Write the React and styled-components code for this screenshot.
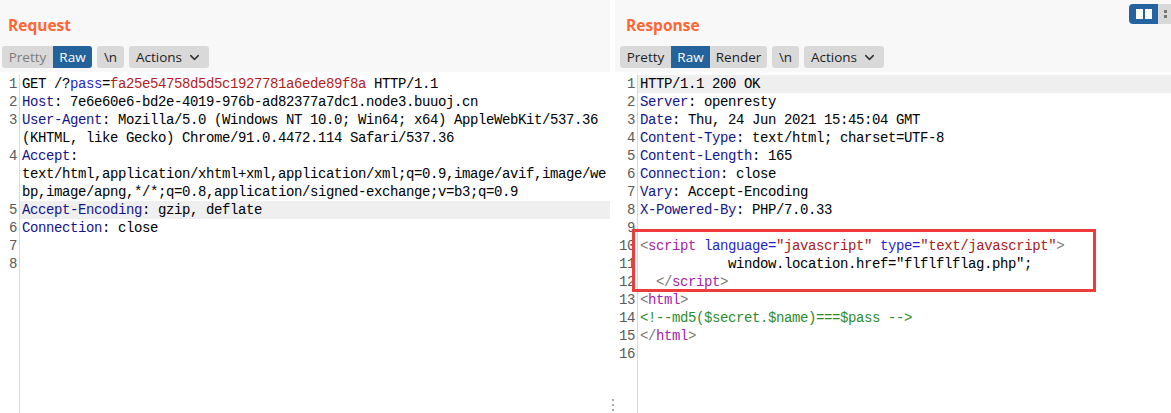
import React from "react";
import styled, { createGlobalStyle } from "styled-components";
import { ChevronDown } from "lucide-react";

const Global = createGlobalStyle`
  html, body, #root {
    margin: 0;
    height: 100%;
    overflow: hidden;
    background: #ffffff;
  }
`;

const C = {
  plain: "#000000",
  key: "#15158a",
  param: "#2626c8",
  val: "#b31d1d",
  tag: "#a424a4",
  punc: "#7a7a7a",
  attr: "#1f1fd0",
  str: "#a52020",
  cmt: "#2f8a2f",
};

const request = [
  { rows: [[["GET /?"], ["pass", "param"], ["="], ["fa25e54758d5d5c1927781a6ede89f8a", "val"], [" HTTP/1.1"]]] },
  { rows: [[["Host", "key"], [": 7e6e60e6-bd2e-4019-976b-ad82377a7dc1.node3.buuoj.cn"]]] },
  {
    rows: [
      [["User-Agent", "key"], [": Mozilla/5.0 (Windows NT 10.0; Win64; x64) AppleWebKit/537.36"]],
      [["(KHTML, like Gecko) Chrome/91.0.4472.114 Safari/537.36"]],
    ],
  },
  {
    rows: [
      [["Accept", "key"], [":"]],
      [["text/html,application/xhtml+xml,application/xml;q=0.9,image/avif,image/we"]],
      [["bp,image/apng,*/*;q=0.8,application/signed-exchange;v=b3;q=0.9"]],
    ],
  },
  { rows: [[["Accept-Encoding", "key"], [": gzip, deflate"]]], hl: true },
  { rows: [[["Connection", "key"], [": close"]]] },
  { rows: [[]] },
  { rows: [[]] },
];

const response = [
  { rows: [[["HTTP/1.1 200 OK"]]], hl: true },
  { rows: [[["Server", "key"], [": openresty"]]] },
  { rows: [[["Date", "key"], [": Thu, 24 Jun 2021 15:45:04 GMT"]]] },
  { rows: [[["Content-Type", "key"], [": text/html; charset=UTF-8"]]] },
  { rows: [[["Content-Length", "key"], [": 165"]]] },
  { rows: [[["Connection", "key"], [": close"]]] },
  { rows: [[["Vary", "key"], [": Accept-Encoding"]]] },
  { rows: [[["X-Powered-By", "key"], [": PHP/7.0.33"]]] },
  { rows: [[]] },
  {
    rows: [
      [
        ["<", "punc"], ["script", "tag"], [" "], ["language=", "attr"], ['"javascript"', "str"],
        [" "], ["type=", "attr"], ['"text/javascript"', "str"], [">", "punc"],
      ],
    ],
  },
  { rows: [[['           window.location.href="flflflflag.php";']]] },
  { rows: [[["  "], ["</", "punc"], ["script", "tag"], [">", "punc"]]] },
  { rows: [[["<", "punc"], ["html", "tag"], [">", "punc"]]] },
  { rows: [[["<!--md5($secret.$name)===$pass -->", "cmt"]]] },
  { rows: [[["</", "punc"], ["html", "tag"], [">", "punc"]]] },
  { rows: [[]] },
];

function CodeView({ lines, children }) {
  return (
    <Body>
      <Gutter>
        {lines.map((l, i) => (
          <LineNo key={i} $rows={l.rows.length}>
            {i + 1}
          </LineNo>
        ))}
      </Gutter>
      <Lines>
        {lines.map((l, i) => (
          <Line key={i} $hl={l.hl}>
            {l.rows.map((r, j) => (
              <Row key={j}>
                {r.map(([t, k = "plain"], n) => (
                  <Tok key={n} $c={C[k]}>
                    {t}
                  </Tok>
                ))}
              </Row>
            ))}
          </Line>
        ))}
      </Lines>
      {children}
    </Body>
  );
}

function Toolbar({ tabs, active, disabledFirst }) {
  return (
    <Bar>
      <Segment>
        {tabs.map(([label, w]) => (
          <Btn key={label} $w={w} $active={label === active} $muted={disabledFirst && label === "Pretty"}>
            {label}
          </Btn>
        ))}
      </Segment>
      <Btn $w={27} $round>
        \n
      </Btn>
      <Btn $w={80} $round>
        Actions
        <ChevronDown size={15} strokeWidth={2.4} color="#333" />
      </Btn>
    </Bar>
  );
}

export default function App() {
  return (
    <>
      <Global />
      <Page>
        <Panel $left>
          <Header>
            <TitleRow>
              <Title>Request</Title>
            </TitleRow>
            <Toolbar tabs={[["Pretty", 51], ["Raw", 39]]} active="Raw" disabledFirst />
          </Header>
          <CodeView lines={request} />
        </Panel>
        <Splitter>
          <Dot />
          <Dot />
          <Dot />
        </Splitter>
        <Panel>
          <Header>
            <TitleRow>
              <Title>Response</Title>
              <Toggle>
                <ToggleBtn $on>
                  <svg width="16" height="10" viewBox="0 0 16 10">
                    <rect x="0" y="0" width="7" height="10" fill="#fff" />
                    <rect x="9" y="0" width="7" height="10" fill="#fff" />
                  </svg>
                </ToggleBtn>
                <ToggleBtn>
                  <svg width="10" height="10" viewBox="0 0 10 10">
                    <rect x="0" y="1" width="3" height="3" fill="#777" />
                    <rect x="0" y="6" width="3" height="3" fill="#777" />
                  </svg>
                </ToggleBtn>
              </Toggle>
            </TitleRow>
            <Toolbar tabs={[["Pretty", 51], ["Raw", 39], ["Render", 57]]} active="Raw" />
          </Header>
          <CodeView lines={response}>
            <Marker />
          </CodeView>
        </Panel>
      </Page>
    </>
  );
}

const Page = styled.div`
  display: flex;
  height: 100%;
  overflow: hidden;
`;

const Panel = styled.div`
  display: flex;
  flex-direction: column;
  flex: ${(p) => (p.$left ? "0 0 613px" : "1 1 auto")};
  margin-left: ${(p) => (p.$left ? "-3px" : "0")};
  min-width: 0;
`;

const Header = styled.div`
  background: #f8f8f8;
  padding-bottom: 4px;
`;

const TitleRow = styled.div`
  display: flex;
  justify-content: space-between;
  align-items: flex-start;
  height: 46px;
  padding-left: 11px;
`;

const Title = styled.div`
  margin-top: 15px;
  font-family: "Open Sans", "Noto Sans", sans-serif;
  font-weight: 700;
  font-size: 15.5px;
  line-height: 20px;
  color: #ff6633;
`;

const Toggle = styled.div`
  display: flex;
  margin-top: 4px;
  margin-right: -8px;
  height: 20px;
`;

const ToggleBtn = styled.div`
  display: flex;
  align-items: center;
  justify-content: center;
  width: ${(p) => (p.$on ? "29px" : "21px")};
  background: ${(p) => (p.$on ? "#2462a0" : "#d9d9d9")};
  border-radius: ${(p) => (p.$on ? "4px 0 0 4px" : "0")};
`;

const Bar = styled.div`
  display: flex;
  gap: 5px;
  height: 22px;
  padding-left: 5px;
`;

const Segment = styled.div`
  display: flex;
  border-radius: 3px;
  overflow: hidden;
`;

const Btn = styled.div`
  display: flex;
  align-items: center;
  justify-content: center;
  gap: 5px;
  box-sizing: border-box;
  width: ${(p) => p.$w}px;
  height: 22px;
  border-radius: ${(p) => (p.$round ? "3px" : "0")};
  background: ${(p) => (p.$active ? "#24629b" : "#d9d9d9")};
  color: ${(p) => (p.$active ? "#ffffff" : p.$muted ? "#7d7d7d" : "#1e1e1e")};
  font-family: "Open Sans", "Noto Sans", sans-serif;
  font-size: 13.5px;
  white-space: pre;
`;

const Splitter = styled.div`
  flex: 0 0 5px;
  display: flex;
  flex-direction: column;
  align-items: center;
  justify-content: flex-end;
  gap: 3px;
  padding-bottom: 2px;
`;

const Dot = styled.div`
  width: 2px;
  height: 2px;
  background: #a8a8a8;
`;

const Body = styled.div`
  position: relative;
  flex: 1;
  display: flex;
  margin-top: 3px;
  font-family: "Liberation Mono", "DejaVu Sans Mono", monospace;
  font-size: 14px;
  letter-spacing: -0.4px;
  line-height: 18px;
`;

const Gutter = styled.div`
  flex: 0 0 20px;
  border-right: 1px solid #d8d8d8;
  padding-right: 2px;
  text-align: right;
  color: #5a5a5a;
`;

const LineNo = styled.div`
  height: ${(p) => p.$rows * 18}px;
`;

const Lines = styled.div`
  flex: 1;
  min-width: 0;
`;

const Line = styled.div`
  background: ${(p) => (p.$hl ? "#efefef" : "transparent")};
`;

const Row = styled.div`
  height: 18px;
  padding-left: 2px;
  white-space: pre;
`;

const Tok = styled.span`
  color: ${(p) => p.$c};
`;

const Marker = styled.div`
  position: absolute;
  left: 17px;
  top: 154px;
  width: 464px;
  height: 63px;
  box-sizing: border-box;
  border: 3px solid #ee3b3b;
  pointer-events: none;
`;
